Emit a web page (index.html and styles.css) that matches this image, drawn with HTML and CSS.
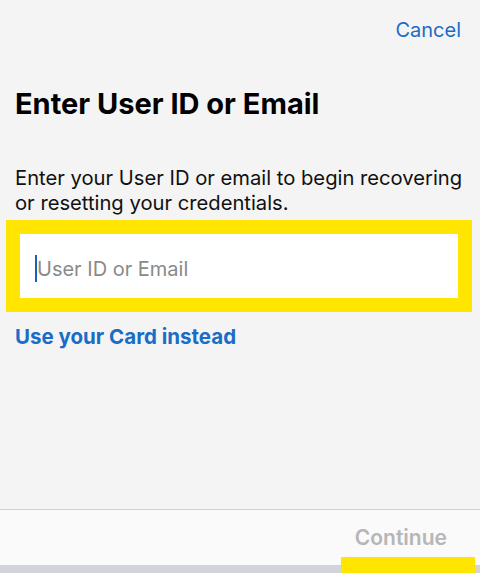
FILE: index.html
```html
<!DOCTYPE html>
<html lang="en">
<head>
    <meta charset="UTF-8">
    <meta name="viewport" content="width=device-width, initial-scale=1.0">
    <title>Enter User ID or Email</title>
    <link rel="stylesheet" href="styles.css">
</head>
<body>
    <div class="screen">
        <div class="top-bar">
            <a class="cancel" href="#">Cancel</a>
        </div>
        <h1>Enter User ID or Email</h1>
        <p class="intro">Enter your User ID or email to begin recovering or resetting your credentials.</p>
        <div class="field-highlight">
            <div class="field">
                <span class="caret"></span>
                <span class="placeholder">User ID or Email</span>
            </div>
        </div>
        <a class="alt-link" href="#">Use your Card instead</a>
        <div class="spacer"></div>
        <footer class="bottom-bar">
            <button class="continue" disabled>Continue</button>
        </footer>
        <div class="home-strip"></div>
        <div class="mark"></div>
    </div>
</body>
</html>
```

FILE: styles.css
```css
body {
    margin: 0;
    padding: 0;
    background-color: #f4f4f4;
    font-family: 'Inter', 'Liberation Sans', sans-serif;
    color: #111;
}
.screen {
    position: relative;
    height: 573px;
    display: flex;
    flex-direction: column;
    overflow: hidden;
}
.top-bar {
    display: flex;
    justify-content: flex-end;
    padding: 17px 19px 0 0;
}
.cancel {
    color: #1a6cc8;
    font-size: 20px;
    line-height: 26px;
    text-decoration: none;
}
h1 {
    margin: 43px 0 0 15px;
    font-size: 29px;
    line-height: 35px;
    font-weight: 700;
    color: #000;
}
.intro {
    margin: 44px 15px 0 15px;
    font-size: 20.2px;
    line-height: 25px;
}
.field-highlight {
    margin: 5px 8px 0 6px;
    border: 14px solid #ffe500;
}
.field {
    height: 64px;
    box-sizing: border-box;
    padding: 5px 0 0 15px;
    background-color: #fff;
    display: flex;
    align-items: center;
}
.caret {
    width: 2px;
    height: 27px;
    background-color: #1a5fb8;
}
.placeholder {
    font-size: 20px;
    color: #8a8a8a;
}
.alt-link {
    margin: 12px 0 0 15px;
    font-size: 20.5px;
    line-height: 25px;
    font-weight: 700;
    color: #1a6cc8;
    text-decoration: none;
}
.spacer {
    flex: 1;
}
.bottom-bar {
    height: 55px;
    border-top: 1px solid #d2d2d2;
    background-color: #fafafa;
    display: flex;
    justify-content: flex-end;
    align-items: center;
    padding-right: 33px;
}
.continue {
    border: none;
    background: none;
    padding: 0;
    font-family: inherit;
    font-size: 21px;
    font-weight: 600;
    color: #b6b6b6;
}
.home-strip {
    height: 8px;
    background-color: #d1d4d9;
}
/* yellow highlight over the button edge */
.mark {
    position: absolute;
    left: 341px;
    bottom: 0;
    width: 134px;
    height: 16px;
    background-color: #ffe500;
}
```
